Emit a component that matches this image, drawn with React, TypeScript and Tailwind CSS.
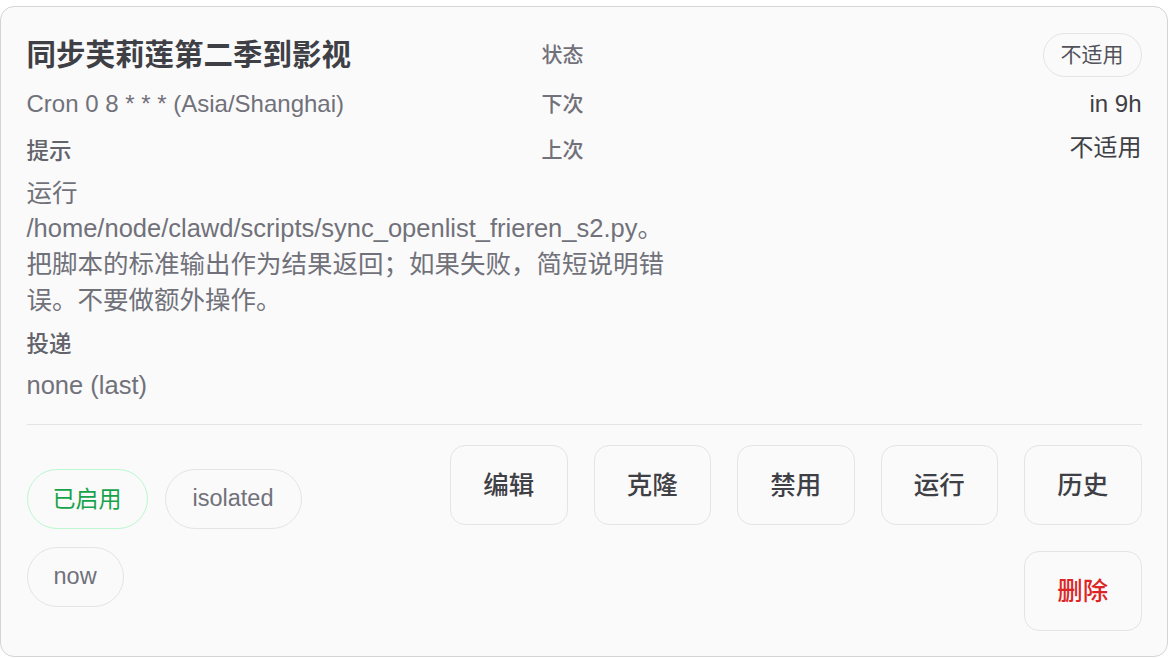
import React from 'react';

const font = { fontFamily: '"Liberation Sans", "Noto Sans CJK SC", sans-serif' };

const actions = ['编辑', '克隆', '禁用', '运行', '历史'];

export default function App() {
  return (
    <div className="min-h-screen bg-white pt-[6px]" style={font}>
      <div className="w-[1168px] rounded-[14px] border-[1.5px] border-[#d4d4d8] bg-[#fafafa] p-[25.5px]">
        {/* 顶部：任务信息 + 状态 */}
        <div className="grid grid-cols-[515px_1fr]">
          <div className="flex flex-col">
            <h2 className="text-[29.5px] leading-[44px] font-semibold text-[#3f3f46]">同步芙莉莲第二季到影视</h2>
            <div className="mt-[9.5px] text-[24px] leading-[36px] text-[#71717a]">Cron 0 8 * * * (Asia/Shanghai)</div>
            <div className="mt-[14.5px] text-[22.5px] leading-[30px] font-medium text-[#63636b]">提示</div>
            <div className="mt-[9px] w-[645px] text-[25.5px] leading-[1.4] text-[#71717a]">
              运行 /home/node/clawd/scripts/sync_openlist_frieren_s2.py。把脚本的标准输出作为结果返回；如果失败，简短说明错误。不要做额外操作。
            </div>
            <div className="mt-[12px] text-[22.5px] leading-[30px] font-medium text-[#63636b]">投递</div>
            <div className="mt-[7px] text-[25.5px] leading-[36px] text-[#71717a]">none (last)</div>
          </div>

          <div className="flex flex-col gap-[9.5px]">
            <div className="flex h-[44px] items-center justify-between">
              <span className="text-[21px] font-medium text-[#71717a]">状态</span>
              <span className="flex h-[44px] items-center rounded-full border-[1.5px] border-[#e4e4e7] px-[17px] text-[21px] text-[#52525b]">
                不适用
              </span>
            </div>
            <div className="flex h-[36px] items-center justify-between">
              <span className="text-[21px] font-medium text-[#71717a]">下次</span>
              <span className="text-[24px] text-[#3f3f46]">in 9h</span>
            </div>
            <div className="flex h-[36px] items-center justify-between">
              <span className="text-[21px] font-medium text-[#71717a]">上次</span>
              <span className="-mt-[4px] text-[24px] text-[#3f3f46]">不适用</span>
            </div>
          </div>
        </div>

        {/* 底部：标签 + 操作按钮 */}
        <div className="mt-[20.5px] flex items-center justify-between border-t-[1.5px] border-[#e4e4e7] pt-[20.5px]">
          <div className="flex w-[330px] flex-wrap gap-x-[17px] gap-y-[18px]">
            <span className="flex h-[60px] items-center rounded-full border-[1.5px] border-[#bbf7d0] px-[25px] text-[23px] text-[#16a34a]">
              已启用
            </span>
            <span className="flex h-[60px] items-center rounded-full border-[1.5px] border-[#e4e4e7] px-[27px] text-[23.5px] text-[#71717a]">
              isolated
            </span>
            <span className="flex h-[60px] items-center rounded-full border-[1.5px] border-[#e4e4e7] px-[26px] text-[23.5px] text-[#71717a]">
              now
            </span>
          </div>

          <div className="flex w-[694px] flex-wrap justify-end gap-x-[26px] gap-y-[25.5px]">
            {actions.map((a) => (
              <button
                key={a}
                className="flex h-[80px] w-[117.5px] items-center justify-center rounded-[15px] border-[1.5px] border-[#e4e4e7] bg-[#fafafa] text-[25.5px] font-medium text-[#3f3f46]"
              >
                {a}
              </button>
            ))}
            <button className="flex h-[80px] w-[117.5px] items-center justify-center rounded-[15px] border-[1.5px] border-[#e4e4e7] bg-[#fafafa] text-[25.5px] font-medium text-[#dc2626]">
              删除
            </button>
          </div>
        </div>
      </div>
    </div>
  );
}
